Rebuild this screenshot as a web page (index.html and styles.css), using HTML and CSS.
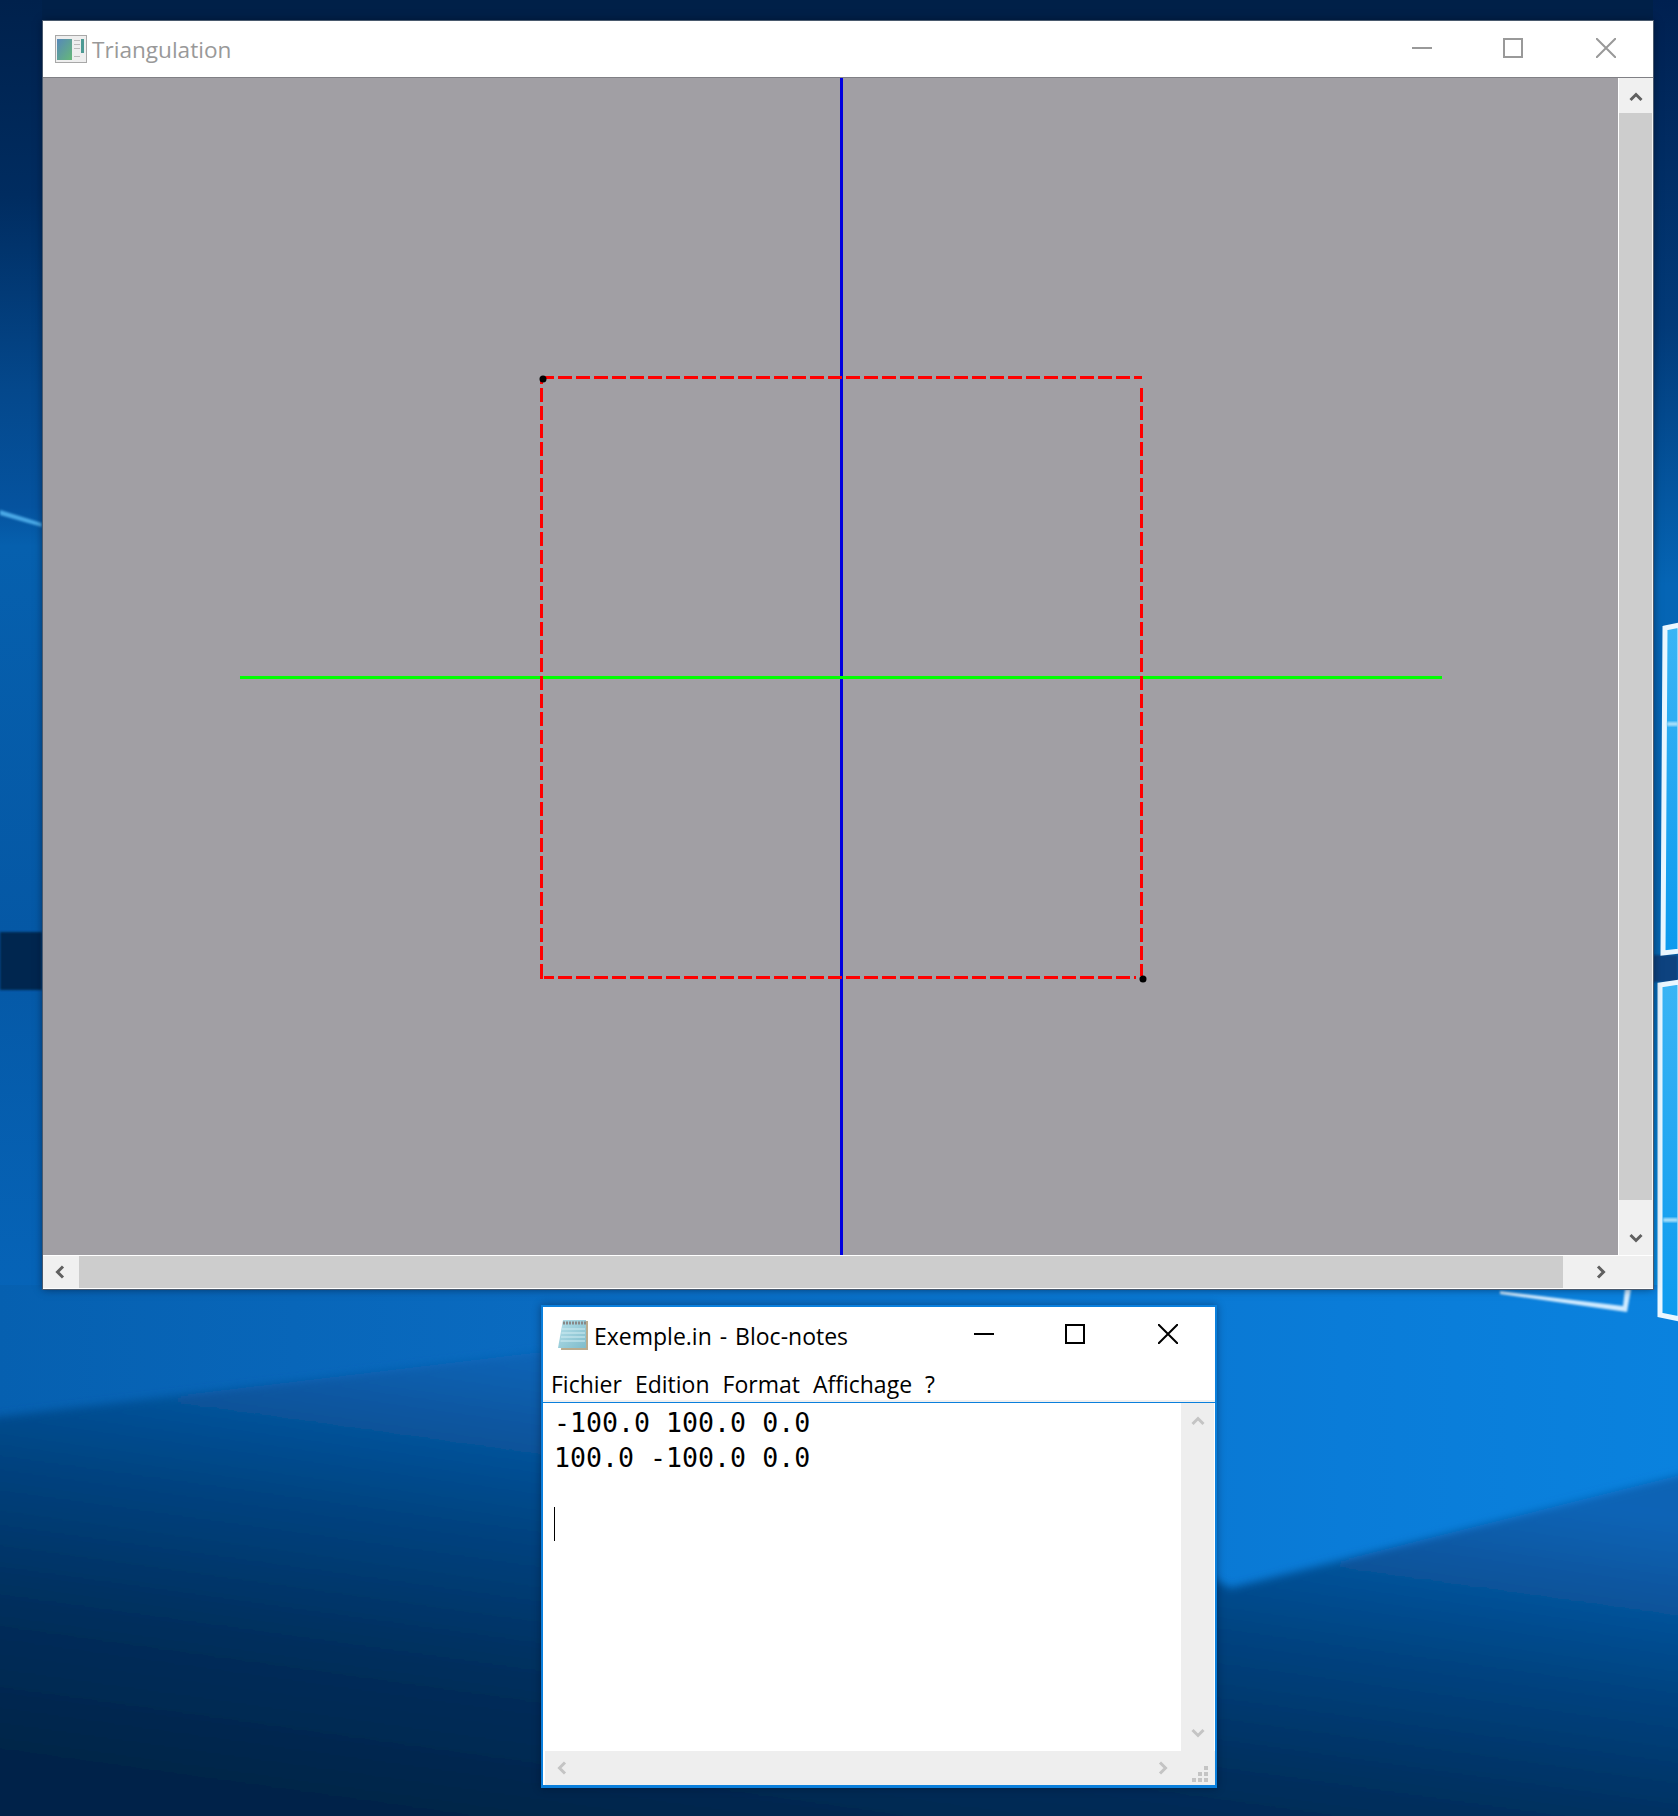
FILE: index.html
```html
<!DOCTYPE html>
<html lang="en">
<head>
    <meta charset="UTF-8">
    <title>Triangulation</title>
    <link rel="stylesheet" href="styles.css">
</head>
<body>
<div class="desktop">
    <!-- wallpaper -->
    <svg class="wallpaper" width="1678" height="1816" viewBox="0 0 1678 1816">
        <defs>
            <linearGradient id="leftside" x1="0" y1="0" x2="0" y2="1">
                <stop offset="0" stop-color="#00214c"/>
                <stop offset="0.15" stop-color="#002c60"/>
                <stop offset="0.3" stop-color="#04488c"/>
                <stop offset="0.39" stop-color="#05539f"/>
                <stop offset="0.42" stop-color="#0660ae"/>
                <stop offset="0.72" stop-color="#0558a5"/>
                <stop offset="1" stop-color="#0664b8"/>
            </linearGradient>
            <linearGradient id="rightside" x1="0" y1="0" x2="0" y2="1">
                <stop offset="0" stop-color="#002050"/>
                <stop offset="0.25" stop-color="#023a78"/>
                <stop offset="0.45" stop-color="#0565b5"/>
                <stop offset="0.73" stop-color="#0566b0"/>
                <stop offset="0.9" stop-color="#0784d8"/>
                <stop offset="1" stop-color="#0896ee"/>
            </linearGradient>
            <linearGradient id="lowerlight" x1="0" y1="0" x2="1" y2="0">
                <stop offset="0" stop-color="#0660b0"/>
                <stop offset="0.35" stop-color="#0a6cc2"/>
                <stop offset="0.8" stop-color="#0a7cd8"/>
                <stop offset="1" stop-color="#0a82de"/>
            </linearGradient>
            <linearGradient id="lowerdark" x1="0.85" y1="0" x2="0.35" y2="1">
                <stop offset="0" stop-color="#0660b0"/>
                <stop offset="0.22" stop-color="#0a64b6"/>
                <stop offset="0.5" stop-color="#044482"/>
                <stop offset="0.75" stop-color="#022e5c"/>
                <stop offset="1" stop-color="#012448"/>
            </linearGradient>
            <linearGradient id="pane" x1="0" y1="0" x2="0" y2="1">
                <stop offset="0" stop-color="#3ab5f5"/>
                <stop offset="1" stop-color="#0c9aee"/>
            </linearGradient>
            <filter id="soft"><feGaussianBlur stdDeviation="1.2"/></filter>
            <filter id="blur"><feGaussianBlur stdDeviation="4"/></filter>
        </defs>
        <rect width="1678" height="1289" fill="#002048"/>
        <rect width="42" height="1300" fill="url(#leftside)"/>
        <rect x="1653" width="25" height="1300" fill="url(#rightside)"/>
        <rect y="1285" width="1678" height="531" fill="url(#lowerlight)"/>
        <polygon points="-20,1419 541,1352 900,1400 1230,1588 1700,1470 1700,1840 -20,1840" fill="url(#lowerdark)" filter="url(#blur)"/>
        <!-- left strip streak and dark band -->
        <polygon points="0,510 42,523 42,527 0,515" fill="#4aa8e6" filter="url(#soft)"/>
        <rect y="932" width="42" height="58" fill="#02264f" filter="url(#soft)"/>
        <!-- window panes -->
        <rect x="1653" y="955" width="25" height="27" fill="#07427f" filter="url(#soft)"/>
        <polygon points="1500,1294 1627,1312 1631,1289 1625,1289 1623,1306 1500,1291" fill="#cfeaff" filter="url(#soft)"/>
        <polygon points="1665,628 1680,625 1680,951 1663,953" fill="url(#pane)" stroke="#eaf7ff" stroke-width="5"/>
        <polygon points="1660,985 1680,982 1680,1319 1660,1315" fill="url(#pane)" stroke="#eaf7ff" stroke-width="5"/>
        <rect x="1667" y="722" width="11" height="4" fill="#a8dff9" filter="url(#soft)"/>
        <rect x="1663" y="1218" width="15" height="4" fill="#a8dff9" filter="url(#soft)"/>
    </svg>

    <!-- main window -->
    <div class="window tri-window">
        <div class="titlebar">
            <svg class="app-icon" width="32" height="28" viewBox="0 0 32 28">
                <defs>
                    <linearGradient id="scr" x1="0" y1="0" x2="1" y2="1">
                        <stop offset="0" stop-color="#5688ba"/>
                        <stop offset="1" stop-color="#66b878"/>
                    </linearGradient>
                </defs>
                <rect x="0.5" y="0.5" width="31" height="27" fill="#eeeeee" stroke="#a8a8a8"/>
                <rect x="2" y="4" width="15" height="21" fill="url(#scr)"/>
                <rect x="19" y="5" width="6" height="1" fill="#bbbbbb"/>
                <rect x="19" y="9" width="6" height="1" fill="#bbbbbb"/>
                <rect x="19" y="13" width="6" height="1" fill="#bbbbbb"/>
                <rect x="19" y="21" width="6" height="1" fill="#bbbbbb"/>
                <rect x="26" y="4" width="3" height="14" fill="#4c9a94"/>
            </svg>
            <span class="title title-inactive">Triangulation</span>
            <div class="caption caption-inactive">
                <svg width="20" height="20" viewBox="0 0 20 20"><path d="M0 10H20"/></svg>
                <svg width="20" height="20" viewBox="0 0 20 20"><path d="M1 1H19V19H1Z"/></svg>
                <svg width="20" height="20" viewBox="0 0 20 20"><path d="M0 0L20 20M20 0L0 20"/></svg>
            </div>
        </div>
        <div class="tri-main">
            <svg class="canvas" width="1575" height="1177" viewBox="43 78 1575 1177">
                <rect x="43" y="78" width="1575" height="1177" fill="#a19fa4"/>
                <path d="M841.5 78V1255" stroke="#0000e0" stroke-width="3" fill="none"/>
                <path d="M240 677.5H1442" stroke="#00ff00" stroke-width="3" fill="none"/>
                <g stroke="#ff0000" stroke-width="3" fill="none" stroke-dasharray="14 4">
                    <path d="M558 377.5H1142"/>
                    <path d="M558 977.5H1136"/>
                    <path d="M541.5 388V976"/>
                    <path d="M1141.5 388V976"/>
                </g>
                <path d="M543 377.500H554M541.500 377V384M544 977.500H554M541.500 970V979" stroke="#ff0000" stroke-width="3" fill="none"/>
                <circle cx="543" cy="379" r="3.5" fill="#000"/>
                <circle cx="1143" cy="979" r="3.5" fill="#000"/>
            </svg>
            <div class="vbar">
                <div class="bar-btn up-btn">
                    <svg width="14" height="10" viewBox="0 0 14 10"><path d="M1.5 8L7 2.5L12.5 8"/></svg>
                </div>
                <div class="vtrack"></div>
                <div class="bar-btn down-btn">
                    <svg width="14" height="10" viewBox="0 0 14 10"><path d="M1.5 2L7 7.5L12.5 2"/></svg>
                </div>
            </div>
        </div>
        <div class="hbar">
            <div class="bar-btn left-btn">
                <svg width="10" height="14" viewBox="0 0 10 14"><path d="M8 1.5L2.5 7L8 12.5"/></svg>
            </div>
            <div class="htrack"></div>
            <div class="bar-btn right-btn">
                <svg width="10" height="14" viewBox="0 0 10 14"><path d="M2 1.5L7.5 7L2 12.5"/></svg>
            </div>
        </div>
    </div>

    <!-- notepad -->
    <div class="window note-window">
        <div class="note-title">
            <svg class="note-icon" width="32" height="32" viewBox="0 0 32 32">
                <defs>
                    <linearGradient id="padfill" x1="0" y1="0" x2="1" y2="1">
                        <stop offset="0" stop-color="#b6e0ea"/>
                        <stop offset="1" stop-color="#7fbccb"/>
                    </linearGradient>
                </defs>
                <polygon points="6,3 31,3 31,32 4,32" fill="#b9ab8e"/>
                <polygon points="6,2 29,2 29,30 1,30" fill="url(#padfill)"/>
                <path d="M6 5H29" stroke="#888888" stroke-width="3" stroke-dasharray="2 1" fill="none"/>
                <path d="M5 11H28M4.500 15H28M4 19H28M3.500 23H28" stroke="#d2edf3" stroke-width="1" fill="none"/>
            </svg>
            <span class="title note-name">Exemple.in - Bloc-notes</span>
            <div class="caption">
                <svg width="20" height="20" viewBox="0 0 20 20"><path d="M0 10H20"/></svg>
                <svg width="20" height="20" viewBox="0 0 20 20"><path d="M1 1H19V19H1Z"/></svg>
                <svg width="20" height="20" viewBox="0 0 20 20"><path d="M0 0L20 20M20 0L0 20"/></svg>
            </div>
        </div>
        <div class="menu">
            <span>Fichier</span>
            <span>Edition</span>
            <span>Format</span>
            <span>Affichage</span>
            <span>?</span>
        </div>
        <div class="note-main">
            <div class="edit">
                <div class="edit-line">-100.0 100.0 0.0</div>
                <div class="edit-line">100.0 -100.0 0.0</div>
                <div class="edit-line">&nbsp;</div>
                <div class="edit-line"><span class="text-caret"></span></div>
            </div>
            <div class="note-vbar">
                <svg width="14" height="10" viewBox="0 0 14 10"><path d="M1.5 8L7 2.5L12.5 8"/></svg>
                <svg width="14" height="10" viewBox="0 0 14 10"><path d="M1.5 2L7 7.500L12.5 2"/></svg>
            </div>
        </div>
        <div class="note-hbar">
            <svg width="10" height="14" viewBox="0 0 10 14"><path d="M8 1.5L2.5 7L8 12.5"/></svg>
            <svg class="note-right" width="10" height="14" viewBox="0 0 10 14"><path d="M2 1.5L7.500 7L2 12.5"/></svg>
            <svg class="grip" width="16" height="16" viewBox="0 0 16 16">
                <rect x="12" y="0" width="4" height="4"/>
                <rect x="6" y="6" width="4" height="4"/>
                <rect x="12" y="6" width="4" height="4"/>
                <rect x="0" y="12" width="4" height="4"/>
                <rect x="6" y="12" width="4" height="4"/>
                <rect x="12" y="12" width="4" height="4"/>
            </svg>
        </div>
    </div>
</div>
</body>
</html>
```

FILE: styles.css
```css
html, body {
    margin: 0;
    padding: 0;
}

body {
    font-family: "Open Sans", "Noto Sans", sans-serif;
    overflow: hidden;
}

.desktop {
    position: relative;
    width: 1678px;
    height: 1816px;
    overflow: hidden;
}

.wallpaper {
    position: absolute;
    left: 0;
    top: 0;
}

.window {
    position: absolute;
    display: flex;
    flex-direction: column;
    box-sizing: border-box;
    background: #fff;
}

svg {
    display: block;
    flex: none;
}

/* main window */
.tri-window {
    left: 43px;
    top: 21px;
    width: 1610px;
    height: 1268px;
    box-shadow: 0 0 0 1px #4a5a6e, 0 0 8px rgba(0, 10, 30, 0.6);
}

.titlebar {
    display: flex;
    align-items: center;
    height: 56px;
    border-bottom: 1px solid #808085;
    padding-left: 12px;
}

.app-icon {
    margin-right: 5px;
}

.title {
    font-size: 22.6px;
    color: #000;
    white-space: nowrap;
}

.title-inactive {
    color: #999;
}

.note-name {
    margin-top: 3px;
    font-size: 23px;
    word-spacing: 2px;
}

.caption {
    display: flex;
    gap: 71px;
    margin-left: auto;
    padding-right: 37px;
}

.caption svg:nth-child(2) {
    margin-right: 2px;
}

.caption svg path {
    fill: none;
    stroke: #000;
    stroke-width: 2;
}

.caption-inactive {
    margin-top: -2px;
}

.caption-inactive svg path {
    stroke: #999;
}

.tri-main {
    display: flex;
    height: 1177px;
}

.canvas {
    width: 1575px;
    height: 1177px;
}

.bar-btn {
    display: flex;
    align-items: center;
    justify-content: center;
    background: #f0f0f0;
    box-sizing: border-box;
}

.bar-btn svg path {
    fill: none;
    stroke: #606060;
    stroke-width: 3;
}

.vbar {
    display: flex;
    flex-direction: column;
    width: 35px;
    border-left: 1px solid #fff;
    border-right: 1px solid #f4f4f4;
    box-sizing: border-box;
}

.up-btn {
    height: 35px;
    padding-top: 2px;
}

.vtrack {
    height: 1087px;
    background: #cdcdcd;
}

.down-btn {
    height: 55px;
    padding-top: 21px;
}

.hbar {
    display: flex;
    height: 34px;
    border-top: 1px solid #fff;
    border-bottom: 1px solid #fff;
    box-sizing: border-box;
}

.left-btn {
    width: 36px;
    padding-right: 2px;
}

.htrack {
    flex: 1;
    background: #cdcdcd;
}

.right-btn {
    width: 90px;
    justify-content: flex-start;
    padding-left: 33px;
}

/* notepad */
.note-window {
    left: 541px;
    top: 1305px;
    width: 676px;
    height: 483px;
    border: 2px solid #0a7fdc;
    border-bottom-width: 3px;
    box-shadow: 0 0 8px rgba(0, 10, 30, 0.4);
}

.note-title {
    display: flex;
    align-items: center;
    height: 42px;
    padding-top: 6px;
    padding-left: 14px;
}

.note-icon {
    margin-right: 5px;
}

.menu {
    display: flex;
    align-items: center;
    gap: 13px;
    height: 33px;
    padding-top: 12px;
    padding-left: 8px;
    font-size: 23px;
    color: #000;
    border-bottom: 2px solid #f0f0f0;
}

.note-main {
    flex: 1;
    display: flex;
    border-top: 1px solid #0a7fdc;
    min-height: 0;
}

.edit {
    flex: 1;
    padding: 3px 0 0 11px;
    font-family: "DejaVu Sans Mono", monospace;
    font-size: 26.6px;
    color: #000;
}

.edit-line {
    height: 34.5px;
    line-height: 34.5px;
    white-space: pre;
}

.text-caret {
    display: block;
    width: 1px;
    height: 34px;
    margin-top: -3px;
    background: #000;
}

.note-vbar {
    display: flex;
    flex-direction: column;
    align-items: center;
    justify-content: space-between;
    width: 33px;
    padding: 13px 0 13px;
    margin-right: 1px;
    background: #eeeeee;
    box-sizing: border-box;
}

.note-vbar svg path,
.note-hbar svg path {
    fill: none;
    stroke: #c4c4c4;
    stroke-width: 3;
}

.note-hbar {
    display: flex;
    align-items: center;
    height: 34px;
    padding-left: 12px;
    margin-left: 2px;
    background: #eeeeee;
}

.note-right {
    margin-left: 591px;
}

.grip {
    margin-left: 24px;
    margin-top: 11px;
}

.grip rect {
    fill: #c4c4c4;
}
```
